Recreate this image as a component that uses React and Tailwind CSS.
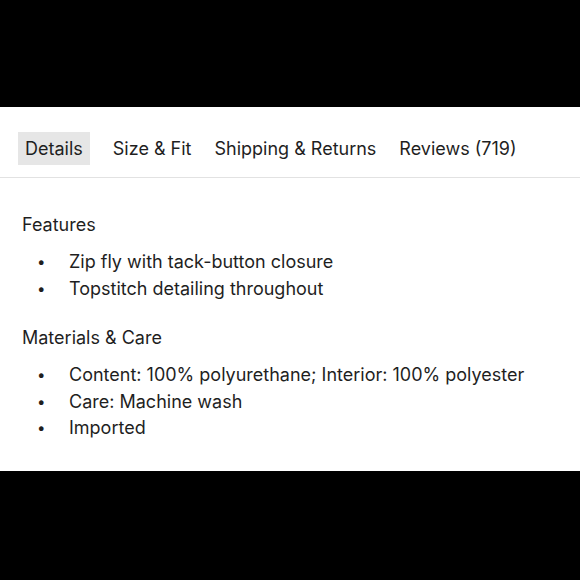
import React from 'react';

const tabs = ['Details', 'Size & Fit', 'Shipping & Returns', 'Reviews (719)'];

const sections = [
  { title: 'Features', items: ['Zip fly with tack-button closure', 'Topstitch detailing throughout'] },
  {
    title: 'Materials & Care',
    items: ['Content: 100% polyurethane; Interior: 100% polyester', 'Care: Machine wash', 'Imported'],
  },
];

const App = () => {
  return (
    <div className="w-[580px] h-[580px] bg-black flex flex-col" style={{ fontFamily: 'Inter, "Noto Sans", sans-serif' }}>
      <div className="h-[107px]" />
      <div className="bg-white h-[364px] text-[#1f1f1f]">
        {/* tabs */}
        <div className="flex items-center gap-[23px] pl-[18px] pt-[25px] pb-[12px] border-b border-[#e2e2e2] text-[18px]">
          {tabs.map((t, i) => (
            <div key={t} className={`h-[33px] flex items-center ${i === 0 ? 'bg-[#e6e6e6] px-[7px]' : ''}`}>
              {t}
            </div>
          ))}
        </div>

        {/* content */}
        <div className="pl-[22px] pt-[33px]">
          {sections.map((s) => (
            <div key={s.title} className="mb-[22px]">
              <h3 className="text-[18px] leading-[27px]">{s.title}</h3>
              <ul className="mt-[11px]">
                {s.items.map((it) => (
                  <li key={it} className="flex text-[18px] leading-[26.5px]">
                    <span className="w-[47px] pl-[15px] text-[15px]">•</span>
                    <span>{it}</span>
                  </li>
                ))}
              </ul>
            </div>
          ))}
        </div>
      </div>
      <div className="flex-1" />
    </div>
  );
};

export default App;
